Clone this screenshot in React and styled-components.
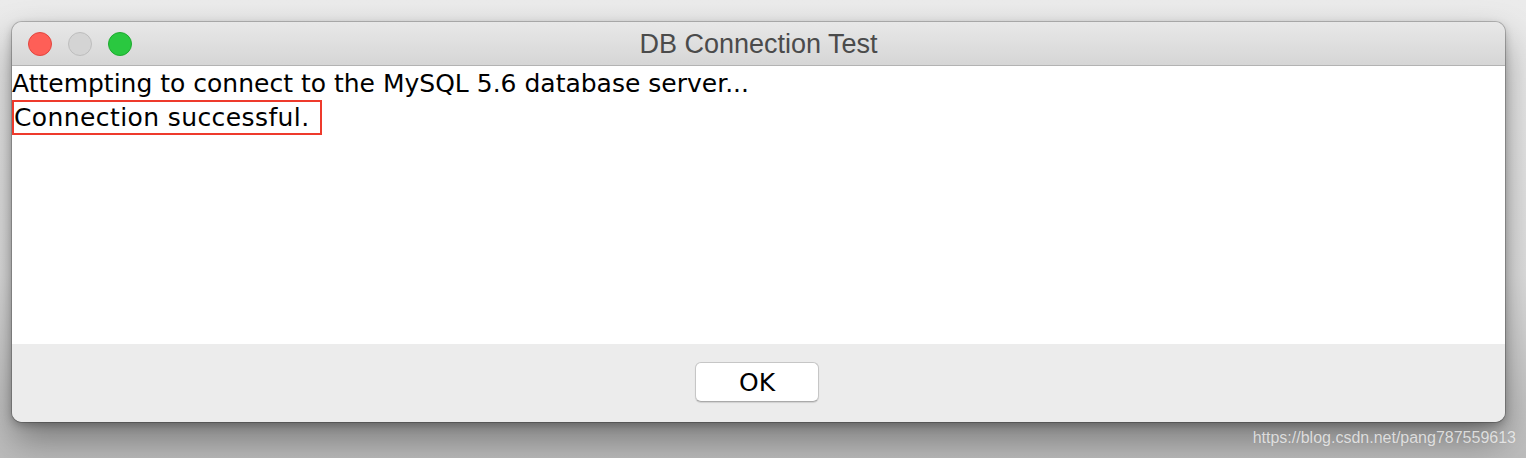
import React from "react";
import styled, { createGlobalStyle } from "styled-components";

const Global = createGlobalStyle`
  html, body { margin: 0; padding: 0; }
  body {
    width: 1526px;
    height: 458px;
    overflow: hidden;
    background: linear-gradient(180deg, #ebebeb 0%, #e0e0e0 60%, #c8c8c8 85%, #bcbcbc 100%);
  }
`;

const Desktop = styled.div`
  position: relative;
  width: 1526px;
  height: 458px;
  padding: 22px 0 0 12px;
  box-sizing: border-box;
`;

const Window = styled.div`
  width: 1493px;
  height: 400px;
  border-radius: 10px;
  overflow: hidden;
  display: flex;
  flex-direction: column;
  background: #ececec;
  box-shadow: 0 0 0 1px rgba(0,0,0,0.2), 0 18px 36px rgba(0,0,0,0.38), 0 3px 8px rgba(0,0,0,0.25);
`;

const TitleBar = styled.div`
  position: relative;
  height: 43px;
  flex: none;
  display: flex;
  align-items: center;
  justify-content: center;
  background: linear-gradient(180deg, #e8e8e8 0%, #d6d6d6 100%);
  border-bottom: 1px solid #b3b3b3;
`;

const Lights = styled.div`
  position: absolute;
  left: 16px;
  top: 10px;
  display: flex;
  gap: 16px;
`;

const Light = styled.span`
  width: 24px;
  height: 24px;
  border-radius: 50%;
  box-sizing: border-box;
  background: ${p => p.$c};
  border: 1px solid ${p => p.$b};
`;

const Title = styled.div`
  font-family: "Liberation Sans", Arial, sans-serif;
  font-size: 27px;
  color: #4b4b4b;
  padding-top: 2px;
`;

const Content = styled.div`
  flex: 1;
  background: #ffffff;
  padding: 1px 0 0 0;
  font-family: "DejaVu Sans", "Open Sans", sans-serif;
  font-size: 25px;
  color: #000;
  line-height: 33px;
`;

const Line = styled.div`
  white-space: nowrap;
`;

const Highlight = styled.span`
  display: inline-block;
  border: 2px solid #ee3a2c;
  padding: 0 10px 0 0;
  line-height: 31px;
  letter-spacing: 0.4px;
`;

const Footer = styled.div`
  height: 78px;
  flex: none;
  display: flex;
  align-items: center;
  justify-content: center;
  background: #ececec;
  padding-bottom: 2px;
  box-sizing: border-box;
`;

const Button = styled.button`
  width: 124px;
  height: 40px;
  margin-right: 3px;
  border-radius: 6px;
  border: 1px solid #c6c6c6;
  border-bottom-color: #aaaaaa;
  background: #ffffff;
  box-shadow: 0 1px 1px rgba(0,0,0,0.12);
  font-family: "DejaVu Sans", "Open Sans", sans-serif;
  font-size: 25px;
  color: #000;
  padding: 0;
`;

const Watermark = styled.div`
  position: absolute;
  right: 10px;
  bottom: 11px;
  font-family: "Liberation Sans", Arial, sans-serif;
  font-size: 16px;
  color: rgba(255,255,255,0.72);
  text-shadow: 0 0 1px rgba(0,0,0,0.1);
`;

export default function App() {
  return (
    <>
      <Global />
      <Desktop>
        <Window>
          <TitleBar>
            <Lights>
              <Light $c="#fe5f57" $b="#e2463f" />
              <Light $c="#d4d4d4" $b="#bdbdbd" />
              <Light $c="#2ac840" $b="#1eaa2f" />
            </Lights>
            <Title>DB Connection Test</Title>
          </TitleBar>
          <Content>
            <Line>Attempting to connect to the MySQL 5.6 database server...</Line>
            <Line><Highlight>Connection successful.</Highlight></Line>
          </Content>
          <Footer>
            <Button>OK</Button>
          </Footer>
        </Window>
        <Watermark>https://blog.csdn.net/pang787559613</Watermark>
      </Desktop>
    </>
  );
}
